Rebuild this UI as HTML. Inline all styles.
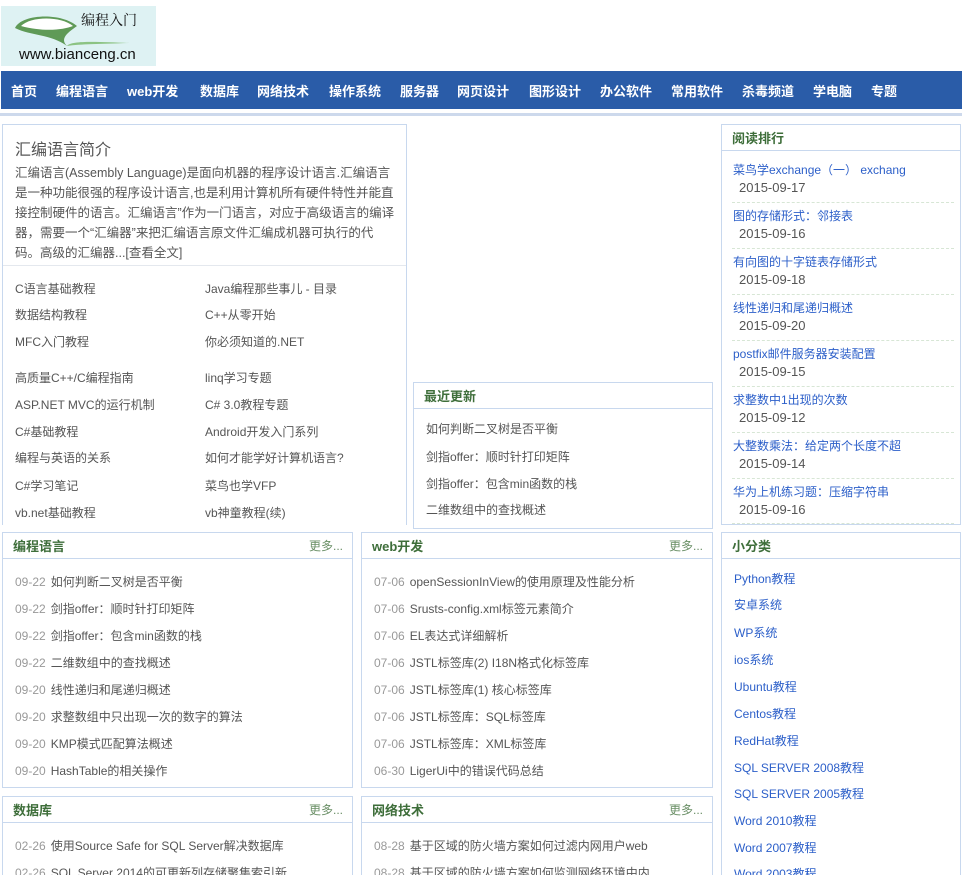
<!DOCTYPE html>
<html><head><meta charset="utf-8"><style>
*{margin:0;padding:0;box-sizing:border-box}
html,body{width:962px;height:875px;overflow:hidden}
body{background:#fff;font-family:"Liberation Sans","Noto Sans CJK SC",sans-serif;font-size:12px;color:#555;position:relative}
.a{position:absolute}
.logo{left:1px;top:6px;width:155px;height:60px;background:#def2f3}
.nav{left:1px;top:71px;width:961px;height:38px;background:#2a5ca8}
.nav span{position:absolute;top:10px;color:#fff;font-weight:bold;font-size:13px;white-space:nowrap}
.line{left:0;top:113px;width:962px;height:3px;background:#cdd9ec}
.box{position:absolute;border:1px solid #c8d8ee;background:#fff}
.hd{height:26px;border-bottom:1px solid #c8d8ee;position:relative}
.hd b{position:absolute;left:10px;top:3px;color:#3e6e3a;font-size:13px}
.hd i{position:absolute;right:9px;top:4px;color:#6a8f66;font-style:normal;font-size:12px}
.t{position:absolute;white-space:nowrap;font-size:12px;color:#555}
.d{color:#999;margin-right:5px}
.bl{color:#2c5fc9}
.dash{position:absolute;left:10px;right:6px;border-top:1px dashed #d7e6d5}
</style></head><body>
<div class="a logo">
<svg width="155" height="60" style="position:absolute;left:0;top:0"><path d="M14 22 C20 8,60 6,76 20 C68 26,58 32,66 40 C50 28,30 30,14 22Z" fill="#5f9a57"/><path d="M20 20 C30 10,60 10,72 20 C62 24,42 26,20 20Z" fill="#fff"/><path d="M66 40 C70 34,100 36,128 37 C100 38,80 38,66 40Z" fill="#8cc383"/></svg>
<span class="a" style="left:80px;top:4px;font-size:14px;color:#111;font-family:'Noto Serif CJK SC',serif">编程入门</span>
<span class="a" style="left:18px;top:40px;font-size:15px;color:#111">www.bianceng.cn</span>
</div>
<div class="a nav">
<span style="left:10px">首页</span><span style="left:55px">编程语言</span><span style="left:126px">web开发</span><span style="left:199px">数据库</span><span style="left:256px">网络技术</span><span style="left:328px">操作系统</span><span style="left:399px">服务器</span><span style="left:456px">网页设计</span><span style="left:528px">图形设计</span><span style="left:599px">办公软件</span><span style="left:670px">常用软件</span><span style="left:741px">杀毒频道</span><span style="left:812px">学电脑</span><span style="left:870px">专题</span>
</div>
<div class="a line"></div>

<div class="box" style="left:2px;top:124px;width:405px;height:401px;border-bottom:none">
<div class="a" style="left:12px;top:11px;font-size:16px;color:#555">汇编语言简介</div>
<div class="a" style="left:12px;top:38px;width:382px;font-size:12.5px;line-height:20px;color:#555">汇编语言(Assembly Language)是面向机器的程序设计语言.汇编语言是一种功能很强的程序设计语言,也是利用计算机所有硬件特性并能直接控制硬件的语言。汇编语言”作为一门语言，对应于高级语言的编译器，需要一个“汇编器”来把汇编语言原文件汇编成机器可执行的代码。高级的汇编器...[查看全文]</div>
<div class="a" style="left:0;top:140px;width:403px;border-top:1px solid #e4e8ee"></div>
<span class="t" style="left:12px;top:155px">C语言基础教程</span><span class="t" style="left:202px;top:155px">Java编程那些事儿 - 目录</span>
<span class="t" style="left:12px;top:181px">数据结构教程</span><span class="t" style="left:202px;top:181px">C++从零开始</span>
<span class="t" style="left:12px;top:208px">MFC入门教程</span><span class="t" style="left:202px;top:208px">你必须知道的.NET</span>
<span class="t" style="left:12px;top:244px">高质量C++/C编程指南</span><span class="t" style="left:202px;top:244px">linq学习专题</span>
<span class="t" style="left:12px;top:271px">ASP.NET MVC的运行机制</span><span class="t" style="left:202px;top:271px">C# 3.0教程专题</span>
<span class="t" style="left:12px;top:298px">C#基础教程</span><span class="t" style="left:202px;top:298px">Android开发入门系列</span>
<span class="t" style="left:12px;top:324px">编程与英语的关系</span><span class="t" style="left:202px;top:324px">如何才能学好计算机语言?</span>
<span class="t" style="left:12px;top:352px">C#学习笔记</span><span class="t" style="left:202px;top:352px">菜鸟也学VFP</span>
<span class="t" style="left:12px;top:379px">vb.net基础教程</span><span class="t" style="left:202px;top:379px">vb神童教程(续)</span>
</div>

<div class="box" style="left:413px;top:382px;width:300px;height:147px">
<div class="hd"><b>最近更新</b></div>
<span class="t" style="left:12px;top:37px">如何判断二叉树是否平衡</span>
<span class="t" style="left:12px;top:65px">剑指offer：顺时针打印矩阵</span>
<span class="t" style="left:12px;top:92px">剑指offer：包含min函数的栈</span>
<span class="t" style="left:12px;top:118px">二维数组中的查找概述</span>
</div>

<div class="box" style="left:721px;top:124px;width:240px;height:401px">
<div class="hd"><b>阅读排行</b></div>
<span class="t bl" style="left:11px;top:36px">菜鸟学exchange（一） exchang</span><span class="t" style="left:17px;top:55px;font-size:13px">2015-09-17</span><div class="dash" style="top:77px"></div>
<span class="t bl" style="left:11px;top:82px">图的存储形式：邻接表</span><span class="t" style="left:17px;top:101px;font-size:13px">2015-09-16</span><div class="dash" style="top:123px"></div>
<span class="t bl" style="left:11px;top:128px">有向图的十字链表存储形式</span><span class="t" style="left:17px;top:147px;font-size:13px">2015-09-18</span><div class="dash" style="top:169px"></div>
<span class="t bl" style="left:11px;top:174px">线性递归和尾递归概述</span><span class="t" style="left:17px;top:193px;font-size:13px">2015-09-20</span><div class="dash" style="top:215px"></div>
<span class="t bl" style="left:11px;top:220px">postfix邮件服务器安装配置</span><span class="t" style="left:17px;top:239px;font-size:13px">2015-09-15</span><div class="dash" style="top:261px"></div>
<span class="t bl" style="left:11px;top:266px">求整数中1出现的次数</span><span class="t" style="left:17px;top:285px;font-size:13px">2015-09-12</span><div class="dash" style="top:307px"></div>
<span class="t bl" style="left:11px;top:312px">大整数乘法：给定两个长度不超</span><span class="t" style="left:17px;top:331px;font-size:13px">2015-09-14</span><div class="dash" style="top:353px"></div>
<span class="t bl" style="left:11px;top:358px">华为上机练习题：压缩字符串</span><span class="t" style="left:17px;top:377px;font-size:13px">2015-09-16</span><div class="dash" style="top:398px"></div>
</div>

<div class="box" style="left:2px;top:532px;width:351px;height:256px">
<div class="hd"><b>编程语言</b><i>更多...</i></div>
<span class="t" style="left:12px;top:40px"><span class="d">09-22</span>如何判断二叉树是否平衡</span>
<span class="t" style="left:12px;top:67px"><span class="d">09-22</span>剑指offer：顺时针打印矩阵</span>
<span class="t" style="left:12px;top:94px"><span class="d">09-22</span>剑指offer：包含min函数的栈</span>
<span class="t" style="left:12px;top:121px"><span class="d">09-22</span>二维数组中的查找概述</span>
<span class="t" style="left:12px;top:148px"><span class="d">09-20</span>线性递归和尾递归概述</span>
<span class="t" style="left:12px;top:175px"><span class="d">09-20</span>求整数组中只出现一次的数字的算法</span>
<span class="t" style="left:12px;top:202px"><span class="d">09-20</span>KMP模式匹配算法概述</span>
<span class="t" style="left:12px;top:229px"><span class="d">09-20</span>HashTable的相关操作</span>
</div>

<div class="box" style="left:361px;top:532px;width:352px;height:256px">
<div class="hd"><b>web开发</b><i>更多...</i></div>
<span class="t" style="left:12px;top:40px"><span class="d">07-06</span>openSessionInView的使用原理及性能分析</span>
<span class="t" style="left:12px;top:67px"><span class="d">07-06</span>Srusts-config.xml标签元素简介</span>
<span class="t" style="left:12px;top:94px"><span class="d">07-06</span>EL表达式详细解析</span>
<span class="t" style="left:12px;top:121px"><span class="d">07-06</span>JSTL标签库(2) I18N格式化标签库</span>
<span class="t" style="left:12px;top:148px"><span class="d">07-06</span>JSTL标签库(1) 核心标签库</span>
<span class="t" style="left:12px;top:175px"><span class="d">07-06</span>JSTL标签库：SQL标签库</span>
<span class="t" style="left:12px;top:202px"><span class="d">07-06</span>JSTL标签库：XML标签库</span>
<span class="t" style="left:12px;top:229px"><span class="d">06-30</span>LigerUi中的错误代码总结</span>
</div>

<div class="box" style="left:721px;top:532px;width:240px;height:343px;border-bottom:none">
<div class="hd"><b>小分类</b></div>
<span class="t bl" style="left:12px;top:37px">Python教程</span>
<span class="t bl" style="left:12px;top:63px">安卓系统</span>
<span class="t bl" style="left:12px;top:91px">WP系统</span>
<span class="t bl" style="left:12px;top:118px">ios系统</span>
<span class="t bl" style="left:12px;top:145px">Ubuntu教程</span>
<span class="t bl" style="left:12px;top:172px">Centos教程</span>
<span class="t bl" style="left:12px;top:199px">RedHat教程</span>
<span class="t bl" style="left:12px;top:226px">SQL SERVER 2008教程</span>
<span class="t bl" style="left:12px;top:252px">SQL SERVER 2005教程</span>
<span class="t bl" style="left:12px;top:279px">Word 2010教程</span>
<span class="t bl" style="left:12px;top:306px">Word 2007教程</span>
<span class="t bl" style="left:12px;top:332px">Word 2003教程</span>
</div>

<div class="box" style="left:2px;top:796px;width:351px;height:79px;border-bottom:none">
<div class="hd"><b>数据库</b><i>更多...</i></div>
<span class="t" style="left:12px;top:40px"><span class="d">02-26</span>使用Source Safe for SQL Server解决数据库</span>
<span class="t" style="left:12px;top:67px"><span class="d">02-26</span>SQL Server 2014的可更新列存储聚集索引新</span>
</div>

<div class="box" style="left:361px;top:796px;width:352px;height:79px;border-bottom:none">
<div class="hd"><b>网络技术</b><i>更多...</i></div>
<span class="t" style="left:12px;top:40px"><span class="d">08-28</span>基于区域的防火墙方案如何过滤内网用户web</span>
<span class="t" style="left:12px;top:67px"><span class="d">08-28</span>基于区域的防火墙方案如何监测网络环境中内</span>
</div>
</body></html>
